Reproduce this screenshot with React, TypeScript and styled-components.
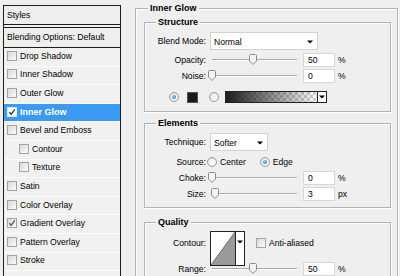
import * as React from "react";
import styled, { createGlobalStyle, css } from "styled-components";

const GlobalStyle = createGlobalStyle`
  html, body {
    margin: 0;
    padding: 0;
    background: #efefef;
  }
  body {
    font-family: "Liberation Sans", Arial, sans-serif;
    font-size: 8.6px;
    color: #000;
  }
`;

const Dialog = styled.div`
  display: flex;
  align-items: flex-start;
  gap: 14px;
  width: 400px;
  height: 276px;
  padding: 2px 0 0 3px;
  box-sizing: border-box;
  overflow: hidden;
`;

/* ---------- left: styles list ---------- */

const StyleList = styled.div`
  flex-shrink: 0;
  width: 118px;
  height: 300px;
  margin-top: 3px;
  box-sizing: border-box;
  border: 1px solid #1c1c1c;
  border-bottom: none;
  background: #f1f1f1;
`;

const HeaderRow = styled.div<{ $second?: boolean }>`
  display: flex;
  align-items: center;
  height: 17px;
  padding: 0 0 1px 3px;
  border-bottom: 1px solid #1c1c1c;
  background: #eeeeee;
  ${(p) =>
    p.$second &&
    css`
      height: 18px;
      margin-top: 2px;
      border-top: 1px solid #1c1c1c;
    `}
`;

const EffectRow = styled.div<{ $active?: boolean; $indent?: boolean }>`
  display: flex;
  align-items: center;
  gap: 3px;
  height: 18.6px;
  box-sizing: border-box;
  padding: 0 0 2px ${(p) => (p.$indent ? 15 : 3)}px;
  border-bottom: 1px solid #fbfbfb;
  background: ${(p) => (p.$active ? "#3a9af4" : "transparent")};
  color: ${(p) => (p.$active ? "#fff" : "#000")};
  font-weight: ${(p) => (p.$active ? "bold" : "normal")};
  font-size: ${(p) => (p.$active ? "9px" : "8.6px")};
`;

const CheckBox = styled.span<{ $white?: boolean }>`
  display: inline-flex;
  align-items: center;
  justify-content: center;
  flex-shrink: 0;
  width: 10px;
  height: 10px;
  box-sizing: border-box;
  border: 1px solid ${(p) => (p.$white ? "#dfe9f5" : "#a3a3a3")};
  background: ${(p) =>
    p.$white ? "#fff" : "linear-gradient(135deg, #d9d9d9, #fbfbfb)"};
`;

const Check = ({ color }: { color: string }) => (
  <svg width="8" height="8" viewBox="0 0 8 8">
    <path d="M1.3 4.2 L3.2 6.3 L6.8 1.3" fill="none" stroke={color} strokeWidth="1.3" />
  </svg>
);

interface Effect {
  name: string;
  checked?: boolean;
  active?: boolean;
  indent?: boolean;
}

const effects: Effect[] = [
  { name: "Drop Shadow" },
  { name: "Inner Shadow" },
  { name: "Outer Glow" },
  { name: "Inner Glow", checked: true, active: true },
  { name: "Bevel and Emboss" },
  { name: "Contour", indent: true },
  { name: "Texture", indent: true },
  { name: "Satin" },
  { name: "Color Overlay" },
  { name: "Gradient Overlay", checked: true },
  { name: "Pattern Overlay" },
  { name: "Stroke" },
];

/* ---------- right: settings ---------- */

const Settings = styled.div`
  flex-shrink: 0;
  width: 263px;
`;

const Group = styled.fieldset<{ $outer?: boolean }>`
  margin: 0;
  min-width: 0;
  box-sizing: border-box;
  border: 1px solid #b3b3b3;
  box-shadow: inset 1px 1px 0 #fff, 1px 1px 0 #fff;
  padding: ${(p) => (p.$outer ? "2px 6px 0 8px" : "4px 0 5px 0")};
  ${(p) => p.$outer && css`height: 300px;`}
`;

const Legend = styled.legend<{ $offset: number }>`
  margin-left: ${(p) => p.$offset}px;
  padding: 0 2px;
  font-size: 9px;
  font-weight: bold;
  line-height: 12px;
  background: #efefef;
`;

const Spacer = styled.div<{ $h: number }>`
  height: ${(p) => p.$h}px;
`;

const Row = styled.div<{ $h: number; $mt?: number }>`
  display: flex;
  align-items: center;
  height: ${(p) => p.$h}px;
  margin-top: ${(p) => p.$mt ?? 0}px;
`;

const TopRow = styled.div<{ $mt?: number }>`
  display: flex;
  align-items: flex-start;
  margin-top: ${(p) => p.$mt ?? 0}px;
`;

const Label = styled.span<{ $mt?: number }>`
  flex-shrink: 0;
  width: 61px;
  text-align: right;
  line-height: 12px;
  margin-top: ${(p) => p.$mt ?? 0}px;
`;

const SelectBox = styled.div<{ $w: number }>`
  display: flex;
  align-items: center;
  justify-content: space-between;
  width: ${(p) => p.$w}px;
  height: 18px;
  margin-left: 4px;
  padding: 1px 4px 0 3px;
  box-sizing: border-box;
  background: #fff;
  border: 1px solid #d2d2d2;
`;

const Arrow = () => (
  <svg width="6" height="4" viewBox="0 0 6 4">
    <path d="M0 0.5 H6 L3 3.5 Z" fill="#000" />
  </svg>
);

const Track = styled.div`
  position: relative;
  width: 85px;
  height: 2px;
  margin-left: 6px;
  box-sizing: border-box;
  border-top: 1px solid #a8a8a8;
  border-bottom: 1px solid #fff;
`;

const ThumbWrap = styled.span`
  position: absolute;
  top: -6px;
  width: 8px;
  height: 11px;
  margin-left: -4px;
`;

const Thumb = () => (
  <svg width="8" height="11" viewBox="0 0 8 11">
    <path
      d="M1.5 0.5 H6.5 Q7.5 0.5 7.5 1.5 V7 L4 10.5 L0.5 7 V1.5 Q0.5 0.5 1.5 0.5 Z"
      fill="#f3f3f3"
      stroke="#8c8c8c"
    />
  </svg>
);

const ValueBox = styled.div`
  width: 32px;
  height: 14px;
  margin-left: 6px;
  padding-left: 4px;
  box-sizing: border-box;
  line-height: 12px;
  background: #fff;
  border: 1px solid #d6d6d6;
`;

const Unit = styled.span`
  margin-left: 3px;
`;

const Radio = styled.span<{ $on?: boolean }>`
  display: inline-flex;
  align-items: center;
  justify-content: center;
  flex-shrink: 0;
  width: 10px;
  height: 10px;
  box-sizing: border-box;
  border-radius: 50%;
  border: 1px solid #9c9c9c;
  background: radial-gradient(circle at 60% 60%, #ffffff, #dcdcdc);
  &::after {
    content: "";
    display: ${(p) => (p.$on ? "block" : "none")};
    width: 4px;
    height: 4px;
    border-radius: 50%;
    background: radial-gradient(circle at 35% 35%, #8fd0ff, #1a63d6);
  }
`;

const Swatch = styled.span`
  width: 11px;
  height: 11px;
  margin-left: 8px;
  box-sizing: border-box;
  border: 1px solid #555;
  background: #1a1a1a;
`;

const GradientBox = styled.div`
  display: flex;
  width: 102px;
  height: 12px;
  margin-left: 6px;
  box-sizing: border-box;
  border: 1px solid #222;
`;

const GradientFill = styled.div`
  flex: 1;
  background-color: #fff;
  background-image: linear-gradient(to right, #1c1c1c, rgba(28, 28, 28, 0.55) 45%, rgba(28, 28, 28, 0)),
    linear-gradient(45deg, #cfcfcf 25%, transparent 25%, transparent 75%, #cfcfcf 75%),
    linear-gradient(45deg, #cfcfcf 25%, transparent 25%, transparent 75%, #cfcfcf 75%);
  background-size: 100% 100%, 6px 6px, 6px 6px;
  background-position: 0 0, 0 0, 3px 3px;
`;

const DropPart = styled.div`
  display: flex;
  align-items: center;
  justify-content: center;
  width: 8px;
  border-left: 1px solid #222;
  background: #fff;
`;

const OptionText = styled.span<{ $ml?: number }>`
  margin-left: 3px;
  margin-right: ${(p) => p.$ml ?? 0}px;
`;

const ContourBox = styled.div`
  display: flex;
  width: 35px;
  height: 35px;
  margin-left: 4px;
  box-sizing: border-box;
  border: 1px solid #222;
  background: #fff;
`;

const ContourArrow = styled.div`
  display: flex;
  justify-content: center;
  width: 9px;
  padding-top: 8px;
  box-sizing: border-box;
  border-left: 1px solid #222;
`;

const ColorRow = styled(Row)`
  padding-left: 24px;
`;

interface SliderProps {
  label: string;
  value: string;
  unit: string;
  pct: number;
  mt?: number;
}

const SliderRow = ({ label, value, unit, pct, mt }: SliderProps) => (
  <Row $h={16} $mt={mt}>
    <Label>{label}</Label>
    <Track>
      <ThumbWrap style={{ left: `${pct}%` }}>
        <Thumb />
      </ThumbWrap>
    </Track>
    <ValueBox>{value}</ValueBox>
    <Unit>{unit}</Unit>
  </Row>
);

const App = (): JSX.Element => {
  return (
    <>
      <GlobalStyle />
      <Dialog>
        <StyleList>
          <HeaderRow>Styles</HeaderRow>
          <HeaderRow $second>Blending Options: Default</HeaderRow>
          {effects.map((effect: Effect) => (
            <EffectRow key={effect.name} $active={effect.active} $indent={effect.indent}>
              <CheckBox $white={effect.active}>
                {effect.checked && <Check color={effect.active ? "#1d2f6b" : "#3d5a8a"} />}
              </CheckBox>
              {effect.name}
            </EffectRow>
          ))}
          <EffectRow />
        </StyleList>

        <Settings>
          <Group $outer>
            <Legend $offset={4}>Inner Glow</Legend>

            <Group>
              <Legend $offset={11}>Structure</Legend>
              <Row $h={18}>
                <Label>Blend Mode:</Label>
                <SelectBox $w={108}>
                  Normal
                  <Arrow />
                </SelectBox>
              </Row>
              <SliderRow label="Opacity:" value="50" unit="%" pct={48} mt={2} />
              <SliderRow label="Noise:" value="0" unit="%" pct={0} />
              <ColorRow $h={14} $mt={6}>
                <Radio $on />
                <Swatch />
                <Radio style={{ marginLeft: 11 }} />
                <GradientBox>
                  <GradientFill />
                  <DropPart>
                    <Arrow />
                  </DropPart>
                </GradientBox>
              </ColorRow>
              <Spacer $h={2} />
            </Group>

            <Spacer $h={5} />

            <Group>
              <Legend $offset={11}>Elements</Legend>
              <Row $h={18}>
                <Label>Technique:</Label>
                <SelectBox $w={58}>
                  Softer
                  <Arrow />
                </SelectBox>
              </Row>
              <Row $h={16} $mt={3}>
                <Label>Source:</Label>
                <Radio style={{ marginLeft: 1 }} />
                <OptionText $ml={14}>Center</OptionText>
                <Radio $on />
                <OptionText>Edge</OptionText>
              </Row>
              <SliderRow label="Choke:" value="0" unit="%" pct={0} />
              <SliderRow label="Size:" value="3" unit="px" pct={3} />
            </Group>

            <Spacer $h={8} />

            <Group>
              <Legend $offset={11}>Quality</Legend>
              <TopRow $mt={-1}>
                <Label $mt={6}>Contour:</Label>
                <ContourBox>
                  <svg width="24" height="33" viewBox="0 0 24 33">
                    <path d="M0 33 L24 0 V33 Z" fill="#9a9a9a" />
                    <path d="M0 33 L24 0" stroke="#555" strokeWidth="0.8" />
                  </svg>
                  <ContourArrow>
                    <Arrow />
                  </ContourArrow>
                </ContourBox>
                <CheckBox style={{ marginLeft: 11, marginTop: 7 }} />
                <OptionText style={{ lineHeight: "12px", marginTop: 6 }}>Anti-aliased</OptionText>
              </TopRow>
              <SliderRow label="Range:" value="50" unit="%" pct={48} mt={-5} />
            </Group>
          </Group>
        </Settings>
      </Dialog>
    </>
  );
};

export default App;
